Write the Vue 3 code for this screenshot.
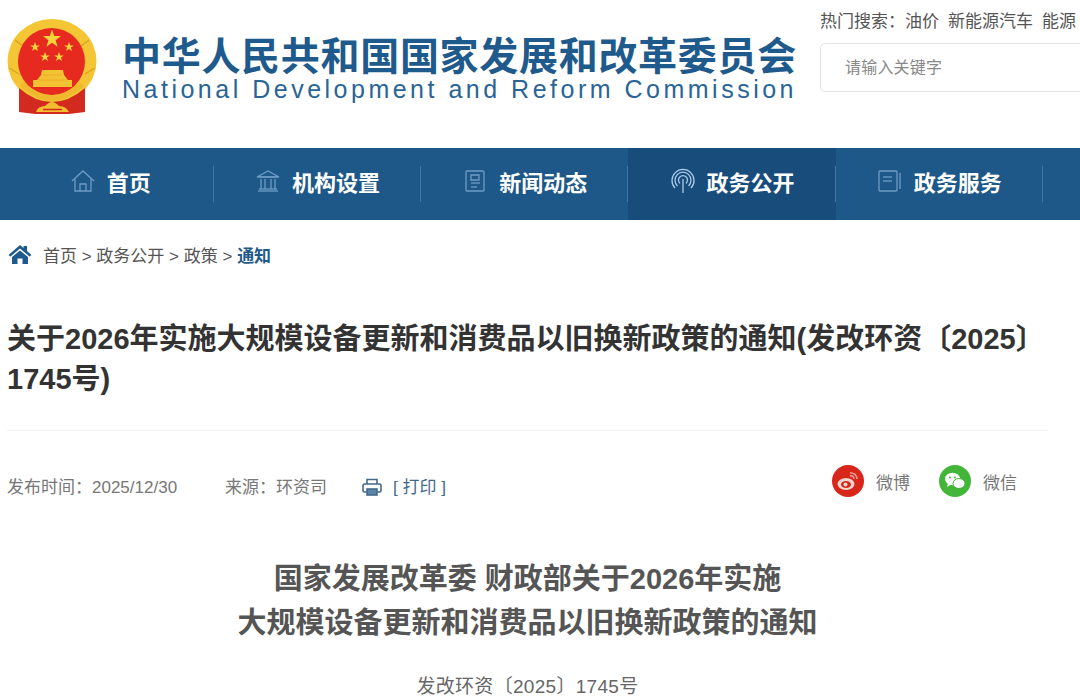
<template>
  <div class="page">
    <header class="top">
      <div class="brand">
        <svg class="emblem" width="92" height="98" viewBox="0 0 92 98">
          <ellipse cx="45" cy="43" rx="44.500" ry="42" fill="#f4c534" />
          <path d="M2 50 L12 56 M88 50 L78 56 M8 22 L16 28 M82 22 L74 28" stroke="#dba21d" stroke-width="1.200" />
          <circle cx="44.500" cy="43.500" r="33.500" fill="#e72a20" />
          <path d="M12 70 Q28 84 45 84 Q62 84 78 70 L78 94 L62 96 H28 L12 94 Z" fill="#d32a20" />
          <polygon v-for="star in stars" :key="star.x" :points="starPoints(star)" fill="#f8d33c" />
          <path d="M35 52 H56 L57 57 L61 62 H65 V69 H26 V62 H30 L34 57 Z" fill="#f3c232" />
          <path d="M31 62 H60 M36 57 H55" stroke="#e8a52a" stroke-width="0.800" />
          <path d="M15 66 Q30 80 45 80 Q60 80 75 66" fill="none" stroke="#f0b82c" stroke-width="5.500" />
          <path d="M29 94 Q31 88 38 88 Q42 84 45 84 Q48 84 52 88 Q59 88 62 94 Z" fill="#f2be2f" />
          <path d="M36 91.500 H55" stroke="#d32a20" stroke-width="1.500" />
        </svg>
        <div class="brand-text">
          <div class="brand-cn">中华人民共和国国家发展和改革委员会</div>
          <div class="brand-en">National Development and Reform Commission</div>
        </div>
      </div>
      <div class="search-side">
        <div class="hot">
          <span>热门搜索：</span>
          <span v-for="word in hotWords" :key="word" class="hot-word">{{ word }}</span>
        </div>
        <div class="search-box">请输入关键字</div>
      </div>
    </header>

    <nav class="nav">
      <a v-for="item in navItems" :key="item.label" class="nav-item" :class="{ active: item.active }">
        <svg class="nav-icon" width="26" height="26" viewBox="0 0 26 26" fill="none" :stroke="item.color" stroke-width="1.300">
          <path v-for="(d, i) in item.paths" :key="i" :d="d" />
        </svg>
        <span>{{ item.label }}</span>
      </a>
    </nav>

    <main class="content">
      <div class="crumbs">
        <svg width="24" height="20" viewBox="0 0 24 20">
          <path d="M12 1 L15.500 4 L15.500 2 L19 2 L19 7 L23.500 11 L21.500 12.500 L12 4.500 L2.500 12.500 L0.500 11 Z" fill="#1f5a8c" />
          <path d="M4 13 L12 6.500 L20 13 L20 20 L14.500 20 L14.500 14.500 L9.500 14.500 L9.500 20 L4 20 Z" fill="#1f5a8c" />
        </svg>
        <span class="crumb-text">首页 &gt; 政务公开 &gt; 政策 &gt; <b>通知</b></span>
      </div>

      <h1 class="title">关于2026年实施大规模设备更新和消费品以旧换新政策的通知(发改环资〔2025〕1745号)</h1>

      <div class="meta">
        <span>发布时间：2025/12/30</span>
        <span class="meta-source">来源：环资司</span>
        <svg class="printer" width="20" height="20" viewBox="0 0 20 20" fill="none" stroke="#44698c" stroke-width="1.600">
          <path d="M5 7 V2.500 H15 V7" />
          <path d="M5 15 H2.500 Q1 15 1 13.500 V8.500 Q1 7 2.500 7 H17.500 Q19 7 19 8.500 V13.500 Q19 15 17.500 15 H15" />
          <rect x="5" y="12" width="10" height="6" fill="#5b85ab" />
        </svg>
        <span class="print">[ 打印 ]</span>
        <div class="share">
          <span class="share-item">
            <span class="round weibo">
              <svg width="24" height="22" viewBox="0 0 24 22">
                <ellipse cx="10" cy="14" rx="8.500" ry="6" fill="#f6d5cf" />
                <ellipse cx="10" cy="14.500" rx="5" ry="3.600" fill="#d9261a" />
                <circle cx="9.500" cy="14.500" r="2" fill="#f6d5cf" />
                <path d="M14 3 A6 6 0 0 1 21 9 M14 6 A3 3 0 0 1 18 9" fill="none" stroke="#f4a59c" stroke-width="1.500" />
              </svg>
            </span>
            微博
          </span>
          <span class="share-item">
            <span class="round wechat">
              <svg width="24" height="20" viewBox="0 0 24 20">
                <ellipse cx="9.500" cy="8" rx="7.500" ry="6.200" fill="#fff" />
                <path d="M5 12 L4 16 L9 13 Z" fill="#fff" />
                <ellipse cx="16" cy="12.500" rx="6" ry="5" fill="#fff" stroke="#43b538" />
                <circle cx="7" cy="6.500" r="1" fill="#43b538" />
                <circle cx="12" cy="6.500" r="1" fill="#43b538" />
              </svg>
            </span>
            微信
          </span>
        </div>
      </div>

      <article class="article">
        <h2>国家发展改革委 财政部关于2026年实施<br />大规模设备更新和消费品以旧换新政策的通知</h2>
        <p class="doc-no">发改环资〔2025〕1745号</p>
      </article>
    </main>
  </div>
</template>

<script setup>
const hotWords = ['油价', '新能源汽车', '能源']

const stars = [
  { x: 45, y: 21, r: 9.5 },
  { x: 28, y: 29, r: 5 },
  { x: 62, y: 29, r: 5 },
  { x: 38, y: 39, r: 5 },
  { x: 52, y: 39, r: 5 }
]

function starPoints({ x, y, r }) {
  const pts = []
  for (let i = 0; i < 10; i++) {
    const rad = i % 2 ? r * 0.4 : r
    const a = (Math.PI / 5) * i - Math.PI / 2
    pts.push(`${(x + rad * Math.cos(a)).toFixed(1)},${(y + rad * Math.sin(a)).toFixed(1)}`)
  }
  return pts.join(' ')
}

const navItems = [
  {
    label: '首页',
    color: '#6f9cc4',
    paths: ['M2 13 L13 3 L24 13', 'M5 11 V23 H21 V11', 'M10 23 V16 H16 V23']
  },
  {
    label: '机构设置',
    color: '#6f9cc4',
    paths: ['M2 9 L13 3 L24 9 Z', 'M4 9 H22', 'M6 11 V21', 'M10 11 V21', 'M16 11 V21', 'M20 11 V21', 'M3 23 H23', 'M4 21 H22']
  },
  {
    label: '新闻动态',
    color: '#6f9cc4',
    paths: ['M5 3 H21 Q22 3 22 4 V22 Q22 23 21 23 H5 Q4 23 4 22 V4 Q4 3 5 3 Z', 'M9 7 H17 V12 H9 Z', 'M9 15 H18', 'M9 19 H15']
  },
  {
    label: '政务公开',
    color: '#a9c9e8',
    active: true,
    paths: ['M5 20 A11 11 0 1 1 21 20', 'M7.500 18 A8 8 0 1 1 18.500 18', 'M10 15.500 A4.500 4.500 0 1 1 16 15.500', 'M13 11 V25']
  },
  {
    label: '政务服务',
    color: '#6f9cc4',
    paths: ['M2 4 Q2 3 3 3 H19 Q20 3 20 4 V22 Q20 23 19 23 H3 Q2 23 2 22 Z', 'M23 5 V21', 'M6 9 H15', 'M6 13 H15']
  }
]
</script>

<style scoped>
.page {
  width: 1080px;
  height: 697px;
  overflow: hidden;
  background: #fff;
  font-family: "Liberation Sans", "Noto Sans CJK SC", sans-serif;
}

.top {
  height: 148px;
  display: flex;
  justify-content: space-between;
  overflow: hidden;
}

.brand {
  display: flex;
  padding: 18px 0 0 7px;
}

.emblem {
  flex: none;
}

.brand-text {
  margin-left: 23px;
  padding-top: 20px;
}

.brand-cn {
  font-size: 39px;
  line-height: 38px;
  font-weight: 700;
  letter-spacing: 0.7px;
  color: #1f5a8c;
  white-space: nowrap;
}

.brand-en {
  font-size: 25px;
  line-height: 26px;
  letter-spacing: 3.5px;
  color: #2a6496;
  white-space: nowrap;
}

.search-side {
  width: 260px;
  flex: none;
  padding-top: 11px;
  overflow: hidden;
}

.hot {
  font-size: 17px;
  line-height: 22px;
  color: #555;
  white-space: nowrap;
}

.hot-word {
  margin-right: 9px;
}

.search-box {
  margin-top: 10px;
  width: 290px;
  height: 49px;
  box-sizing: border-box;
  border: 1px solid #e2e2e2;
  border-radius: 5px;
  padding-left: 24px;
  font-size: 16px;
  letter-spacing: 0.2px;
  line-height: 47px;
  color: #888;
}

.nav {
  height: 72px;
  padding-left: 6.500px;
  display: flex;
  background: #1d5889;
}

.nav-item {
  width: 207.300px;
  height: 72px;
  flex: none;
  box-sizing: border-box;
  padding-bottom: 6px;
  display: flex;
  align-items: center;
  justify-content: center;
  gap: 11px;
  position: relative;
  font-size: 22px;
  font-weight: 700;
  color: #fff;
}

.nav-item::after {
  content: "";
  position: absolute;
  right: 0;
  top: 18px;
  height: 36px;
  width: 1px;
  background: #3f77a5;
}

.nav-item.active {
  background: #174c7b;
}

.nav-icon {
  flex: none;
}

.content {
  padding: 0 32px 0 7px;
}

.crumbs {
  height: 70px;
  padding: 0 0 2px 1px;
  box-sizing: border-box;
  display: flex;
  align-items: center;
  gap: 11px;
}

.crumb-text {
  font-size: 17px;
  color: #555;
}

.crumb-text b {
  color: #1f5a8c;
}

.title {
  margin: 29px 0 0;
  padding-bottom: 31px;
  border-bottom: 1px solid #f1f1f1;
  font-size: 29px;
  line-height: 40px;
  font-weight: 700;
  color: #333;
}

.meta {
  display: flex;
  align-items: center;
  height: 52px;
  margin-top: 28px;
  font-size: 17px;
  color: #777;
}

.meta-source {
  margin-left: 48px;
}

.printer {
  margin: 4px 0 0 35px;
}

.print {
  margin-left: 11px;
  color: #44698c;
}

.share {
  margin-left: auto;
  display: flex;
  gap: 29px;
  padding-right: 31px;
  margin-bottom: 8px;
}

.share-item {
  display: flex;
  align-items: center;
  gap: 12px;
}

.round {
  width: 32px;
  height: 32px;
  border-radius: 50%;
  display: flex;
  align-items: center;
  justify-content: center;
}

.weibo {
  background: #d9261a;
}

.wechat {
  background: #43b538;
}

.article {
  text-align: center;
  margin-top: 46px;
}

.article h2 {
  margin: 0;
  font-size: 29px;
  line-height: 44px;
  font-weight: 700;
  color: #555;
}

.doc-no {
  margin: 30px 0 0;
  font-size: 19px;
  letter-spacing: 0.3px;
  line-height: 24px;
  color: #666;
}
</style>
